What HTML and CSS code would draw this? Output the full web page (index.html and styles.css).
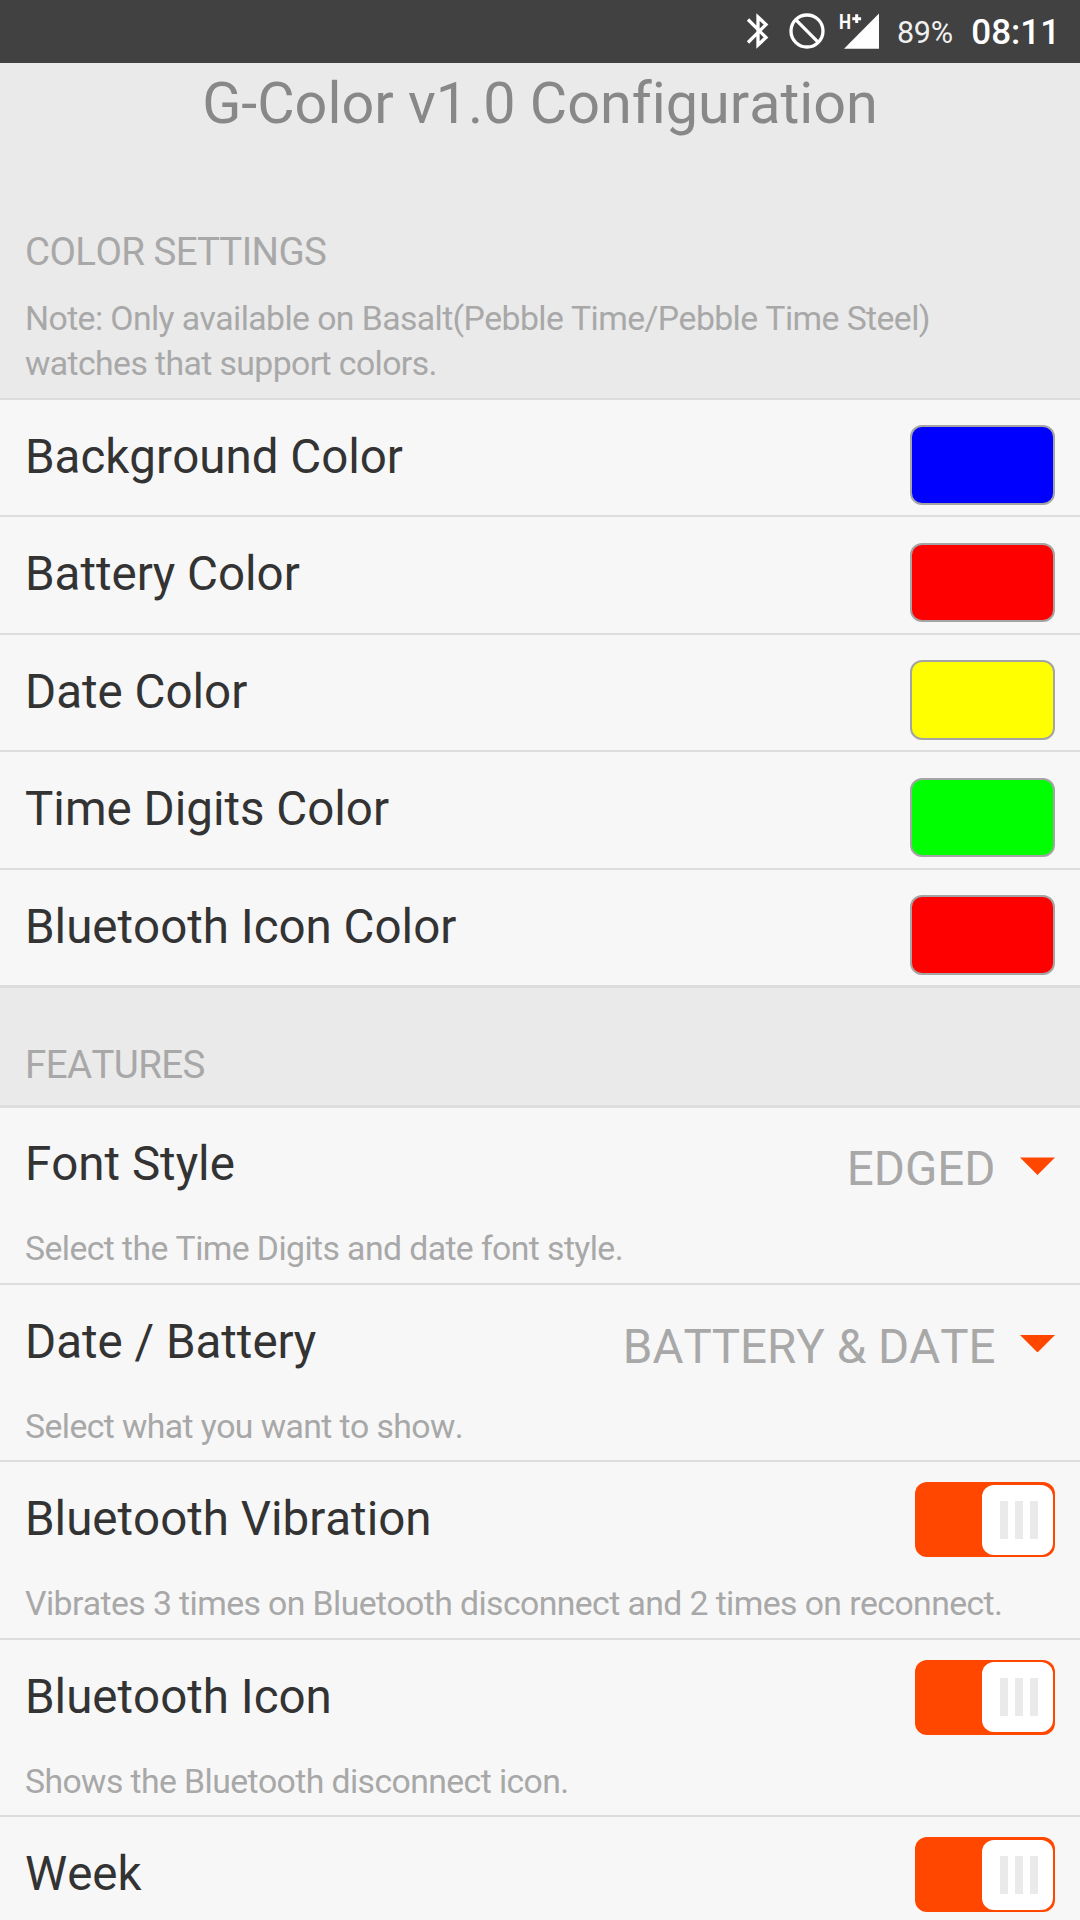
FILE: index.html
```html
<!DOCTYPE html>
<html lang="en">
<head>
<meta charset="utf-8">
<title>G-Color Configuration</title>
<link rel="stylesheet" href="styles.css">
</head>
<body>
<header class="status">
  <svg class="status-icon bluetooth" viewBox="0 0 24 36"><path d="M2 6.500 20 24.500 12 32V4l8 7.500L2 29.500" fill="none" stroke="#fff" stroke-width="3.300"/></svg>
  <svg class="status-icon blocked" viewBox="0 0 36 36"><circle cx="18" cy="18" r="16" fill="none" stroke="#fff" stroke-width="3.300"/><path d="M6.700 6.700 29.300 29.300" stroke="#fff" stroke-width="3.300"/></svg>
  <svg class="status-icon signal" viewBox="0 0 40 36"><path d="M4 35.700 39 .500V35.700z" fill="#fff"/><path d="M12.300 5.700h8.800M16.700 1.300v8.800" stroke="#fff" stroke-width="3"/><text transform="translate(-1 16.300) scale(.85 1)" class="network">H</text></svg>
  <span class="battery">89%</span>
  <span class="clock">08:11</span>
</header>
<main>
  <h1 class="title">G-Color v1.0 Configuration</h1>
  <section>
    <div class="section-head section-head-note">
      <h2 class="heading">COLOR SETTINGS</h2>
      <p class="note">Note: Only available on Basalt(Pebble Time/Pebble Time Steel)<br>watches that support colors.</p>
    </div>
    <div class="list">
      <div class="row"><span class="label">Background Color</span><span class="swatch blue"></span></div>
      <div class="row"><span class="label">Battery Color</span><span class="swatch red"></span></div>
      <div class="row"><span class="label">Date Color</span><span class="swatch yellow"></span></div>
      <div class="row"><span class="label">Time Digits Color</span><span class="swatch green"></span></div>
      <div class="row"><span class="label">Bluetooth Icon Color</span><span class="swatch red"></span></div>
    </div>
  </section>
  <section>
    <div class="section-head"><h2 class="heading">FEATURES</h2></div>
    <div class="list features">
      <div class="row tall"><span class="label">Font Style</span><span class="select">EDGED<i class="arrow"></i></span><p class="desc">Select the Time Digits and date font style.</p></div>
      <div class="row tall"><span class="label">Date / Battery</span><span class="select">BATTERY &amp; DATE<i class="arrow"></i></span><p class="desc">Select what you want to show.</p></div>
      <div class="row tall"><span class="label">Bluetooth Vibration</span><span class="toggle"><span class="knob"><i></i><i></i><i></i></span></span><p class="desc">Vibrates 3 times on Bluetooth disconnect and 2 times on reconnect.</p></div>
      <div class="row tall"><span class="label">Bluetooth Icon</span><span class="toggle"><span class="knob"><i></i><i></i><i></i></span></span><p class="desc">Shows the Bluetooth disconnect icon.</p></div>
      <div class="row tall"><span class="label">Week</span><span class="toggle"><span class="knob"><i></i><i></i><i></i></span></span></div>
    </div>
  </section>
</main>
</body>
</html>
```
FILE: styles.css
```css
* { box-sizing: border-box; }
body { margin: 0; height: 1920px; overflow: hidden; background: #eaeaea; font-family: Roboto, "Liberation Sans", sans-serif; font-kerning: none; font-variant-ligatures: none; }
h1, h2, p { margin: 0; font-weight: 400; }

.status { display: flex; align-items: flex-start; height: 63px; padding: 13px 20px 0 746px; background: #414141; color: #fff; white-space: nowrap; }
.status-icon { flex: none; height: 36px; overflow: visible; }
.bluetooth { width: 24px; margin-right: 19px; }
.blocked { width: 36px; margin-right: 15px; }
.signal { width: 40px; margin-right: 17px; }
.network { font-size: 20px; font-weight: 700; fill: #fff; }
.battery { margin-right: 18.500px; font-size: 30.500px; line-height: 39px; letter-spacing: -0.300px; color: #f0f0f0; }
.clock { font-size: 35px; font-weight: 500; line-height: 40px; }

.title { padding-top: 7px; height: 122px; font-size: 57.500px; line-height: 68px; text-align: center; color: #888; }
.section-head { height: 117.200px; padding: 52px 25px 0; color: #a8a8a8; }
.section-head-note { height: 212.700px; padding-top: 42px; }
.heading { font-size: 38.500px; line-height: 50px; letter-spacing: -0.600px; }
.note { margin-top: 19px; font-size: 33.750px; line-height: 45px; letter-spacing: -0.585px; }

.list { border-bottom: 3px solid #ddd; background: #f7f7f7; }
.row { display: grid; grid-template-columns: 1fr auto; align-items: start; height: 117.500px; padding: 0 25px; border-top: 2px solid #ddd; }
.label { margin-top: 27px; font-size: 47.500px; line-height: 60px; color: #333; }
.swatch { width: 145px; height: 79.600px; margin-top: 25.400px; border: 2px solid #a4a4a4; border-radius: 12px; }
.blue { background: #00f; }
.red { background: #f00; }
.yellow { background: #ff0; }
.green { background: #0f0; }

.tall { height: 177.500px; grid-template-rows: 118.850px 1fr; }
.features .row:first-child { border-top-width: 3px; grid-template-rows: 117.850px 1fr; }
.features .row:first-child .label { margin-top: 26px; }
.desc { grid-column: 1 / -1; font-size: 33.750px; line-height: 45px; letter-spacing: -0.585px; color: #a8a8a8; }
.select { display: flex; margin-top: 32px; gap: 24.500px; font-size: 47.500px; line-height: 60px; color: #a8a8a8; }
.features .row:first-child .select { margin-top: 31px; }
.arrow { width: 35px; height: 17.500px; margin-top: 18px; background: #ff4700; clip-path: polygon(0 0, 100% 0, 50% 100%); }
.toggle { display: flex; justify-content: flex-end; align-items: center; width: 140px; height: 75px; margin-top: 20.100px; padding-right: 2px; border-radius: 12px; background: #ff4700; }
.knob { display: flex; justify-content: center; align-items: center; gap: 7px; width: 71px; height: 70px; padding-left: 3px; border-radius: 12px; background: #fff; }
.knob i { width: 8px; height: 38px; background: #eaeaea; }
```
